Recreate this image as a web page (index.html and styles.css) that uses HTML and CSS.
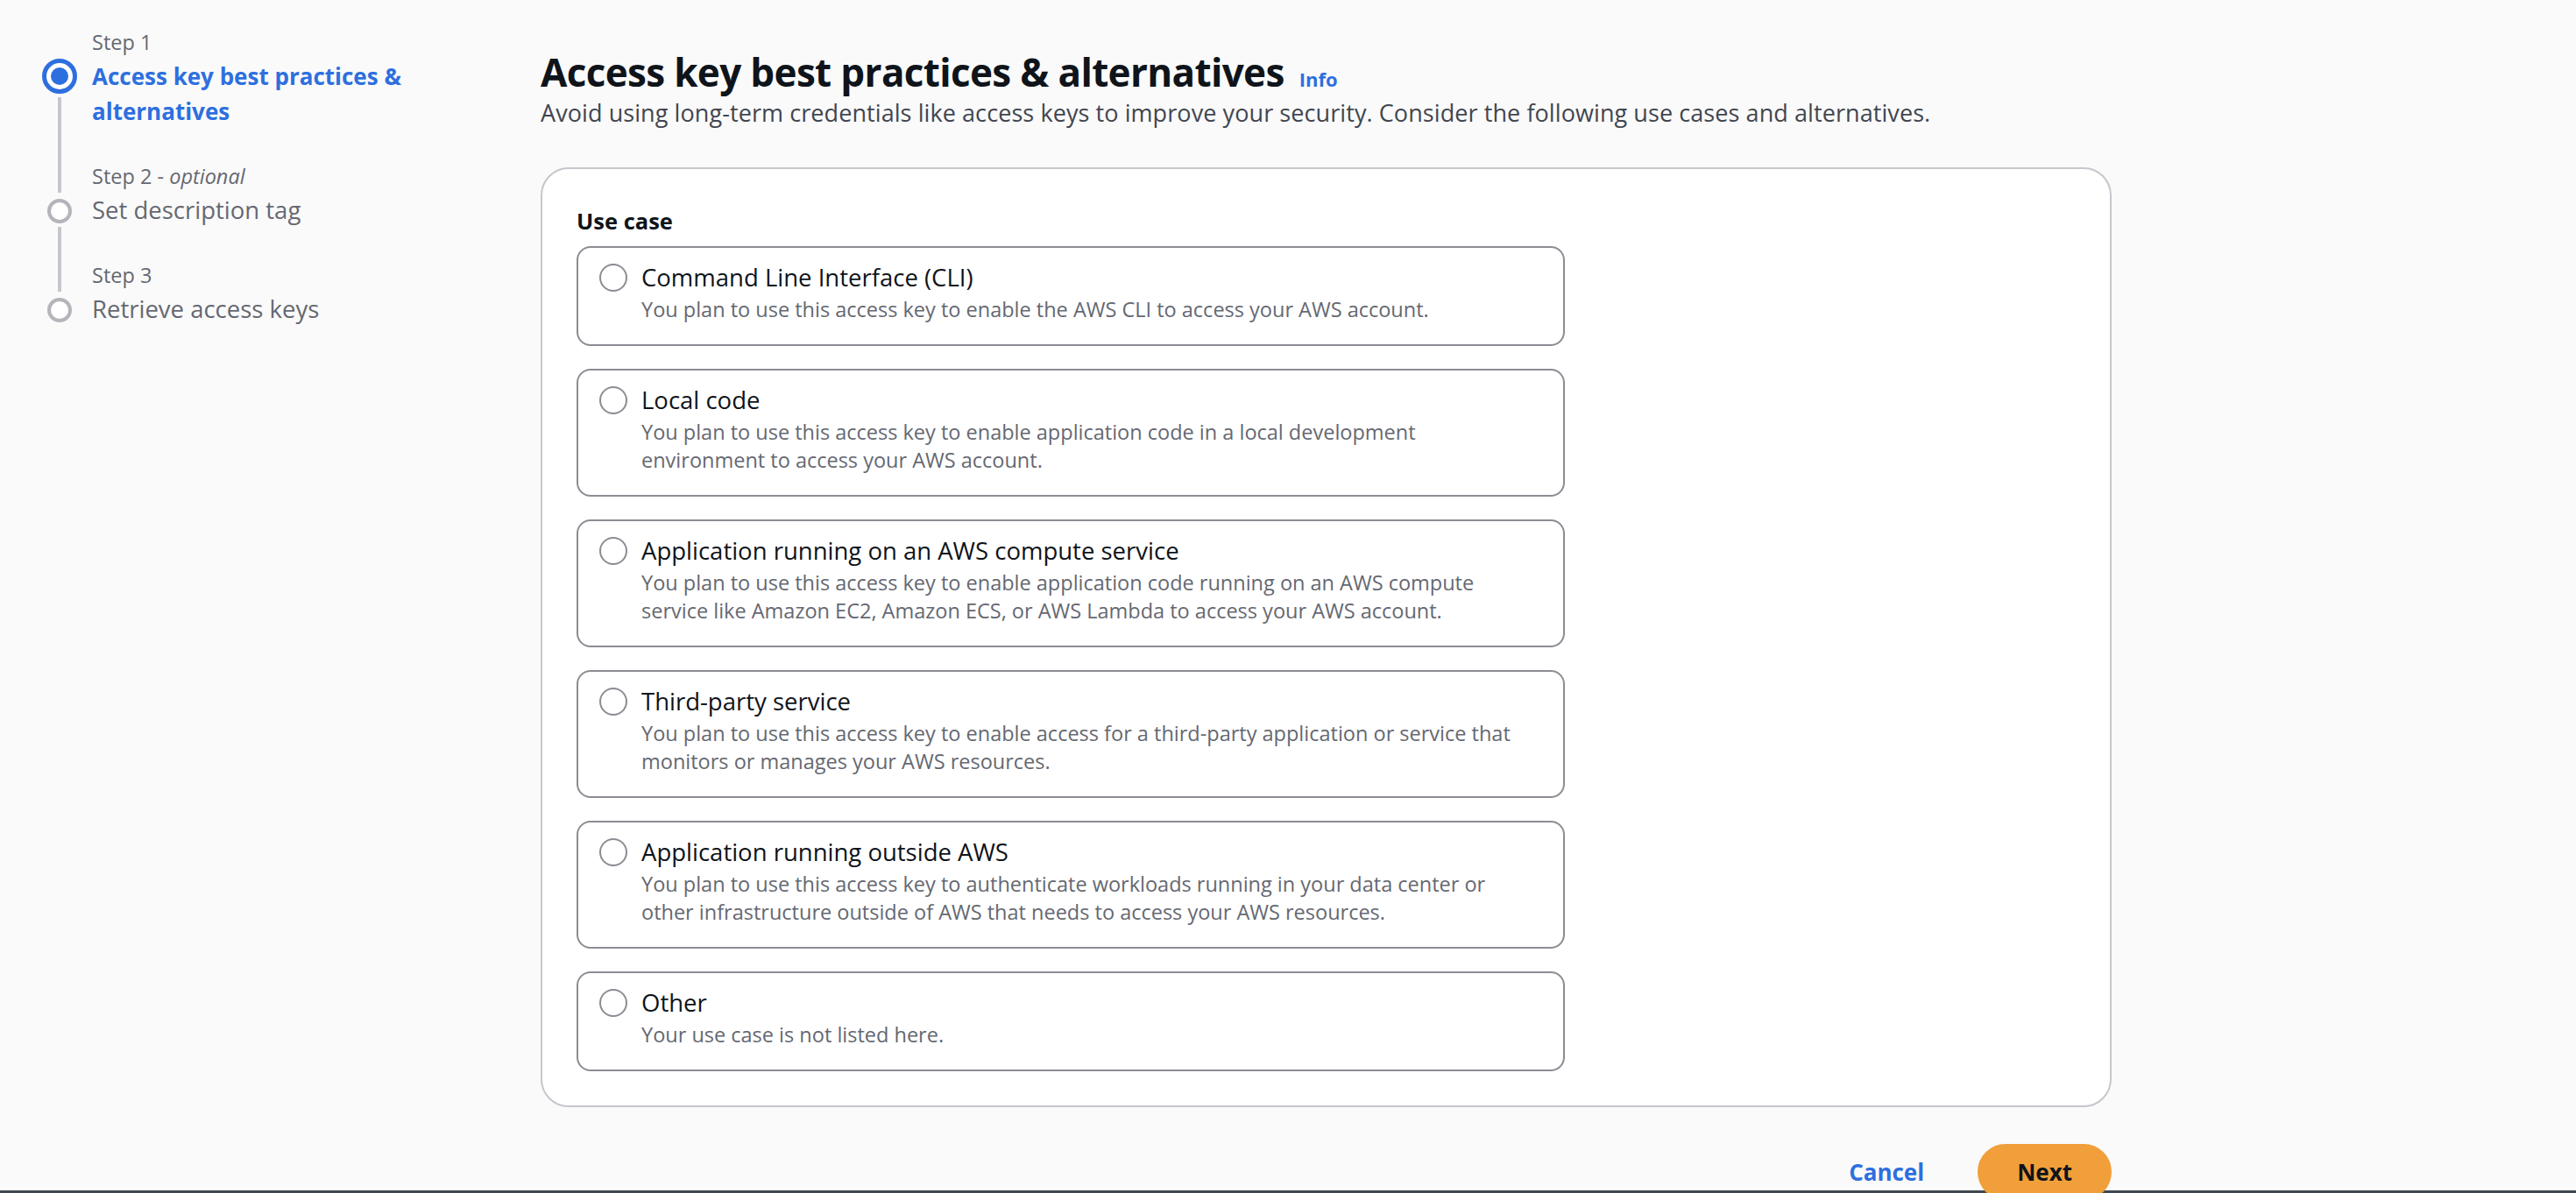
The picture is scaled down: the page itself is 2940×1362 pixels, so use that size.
FILE: index.html
```html
<!DOCTYPE html>
<html lang="en">
<head>
<meta charset="utf-8">
<title>Create access key</title>
<link rel="stylesheet" href="styles.css">
</head>
<body>
<div class="layout">
  <nav class="steps">
    <div class="step">
      <div class="step-label">Step 1</div>
      <div class="step-ind">
        <span class="dot dot-active"></span>
        <span class="rail"></span>
      </div>
      <div class="step-title active">Access key best practices &amp; alternatives</div>
    </div>
    <div class="step">
      <span class="rail-top"></span>
      <div class="step-label">Step 2 - <i>optional</i></div>
      <div class="step-ind">
        <span class="dot"></span>
        <span class="rail"></span>
      </div>
      <div class="step-title">Set description tag</div>
    </div>
    <div class="step">
      <span class="rail-top"></span>
      <div class="step-label">Step 3</div>
      <div class="step-ind">
        <span class="dot"></span>
      </div>
      <div class="step-title last">Retrieve access keys</div>
    </div>
  </nav>

  <main class="main">
    <h1 class="title">Access key best practices &amp; alternatives<a class="info">Info</a></h1>
    <p class="lead">Avoid using long-term credentials like access keys to improve your security. Consider the following use cases and alternatives.</p>

    <section class="container">
      <div class="field-label">Use case</div>
      <div class="tiles">
        <label class="tile">
          <span class="radio"></span>
          <span class="tile-text">
            <span class="tile-title">Command Line Interface (CLI)</span>
            <span class="tile-desc">You plan to use this access key to enable the AWS CLI to access your AWS account.</span>
          </span>
        </label>
        <label class="tile">
          <span class="radio"></span>
          <span class="tile-text">
            <span class="tile-title">Local code</span>
            <span class="tile-desc">You plan to use this access key to enable application code in a local development<br>environment to access your AWS account.</span>
          </span>
        </label>
        <label class="tile">
          <span class="radio"></span>
          <span class="tile-text">
            <span class="tile-title">Application running on an AWS compute service</span>
            <span class="tile-desc">You plan to use this access key to enable application code running on an AWS compute<br>service like Amazon EC2, Amazon ECS, or AWS Lambda to access your AWS account.</span>
          </span>
        </label>
        <label class="tile">
          <span class="radio"></span>
          <span class="tile-text">
            <span class="tile-title">Third-party service</span>
            <span class="tile-desc">You plan to use this access key to enable access for a third-party application or service that<br>monitors or manages your AWS resources.</span>
          </span>
        </label>
        <label class="tile">
          <span class="radio"></span>
          <span class="tile-text">
            <span class="tile-title">Application running outside AWS</span>
            <span class="tile-desc">You plan to use this access key to authenticate workloads running in your data center or<br>other infrastructure outside of AWS that needs to access your AWS resources.</span>
          </span>
        </label>
        <label class="tile">
          <span class="radio"></span>
          <span class="tile-text">
            <span class="tile-title">Other</span>
            <span class="tile-desc">Your use case is not listed here.</span>
          </span>
        </label>
      </div>
    </section>

    <div class="actions">
      <button class="btn btn-link">Cancel</button>
      <button class="btn btn-primary">Next</button>
    </div>
  </main>
</div>
<div class="footer-bar"></div>
</body>
</html>
```
FILE: styles.css
```css
html, body {
  margin: 0;
  padding: 0;
}
body {
  background: #fafafa;
  font-family: "Open Sans", "Noto Sans", "Liberation Sans", sans-serif;
  color: #0f141a;
  height: 1362px;
  overflow: hidden;
}
.layout {
  display: flex;
  align-items: flex-start;
}

/* ---------- steps nav ---------- */
.steps {
  width: 617px;
  box-sizing: border-box;
  padding: 32px 0 0 48px;
  flex: none;
}
.step {
  display: grid;
  grid-template-columns: 40px 400px;
  column-gap: 17px;
}
.step-label {
  grid-column: 2;
  grid-row: 1;
  font-size: 23.5px;
  line-height: 32px;
  color: #656871;
  margin-bottom: 3px;
}
.step-label i {
  font-style: italic;
}
.rail-top {
  grid-column: 1;
  grid-row: 1;
  justify-self: center;
  width: 4px;
  background: #c6c6cd;
}
.step-ind {
  grid-column: 1;
  grid-row: 2;
  display: flex;
  flex-direction: column;
  align-items: center;
}
.dot {
  width: 28px;
  height: 28px;
  box-sizing: border-box;
  border: 4px solid #b4b4bb;
  border-radius: 50%;
  background: #ffffff;
  margin-top: 7px;
  flex: none;
}
.dot-active {
  width: 40px;
  height: 40px;
  margin-top: 0;
  border: 5px solid #2e6fdf;
  display: flex;
  align-items: center;
  justify-content: center;
}
.dot-active::after {
  content: "";
  width: 20px;
  height: 20px;
  border-radius: 50%;
  background: #2e6fdf;
}
.rail {
  flex: 1;
  width: 4px;
  background: #c6c6cd;
  margin-top: 4px;
}
.step-title {
  grid-column: 2;
  grid-row: 2;
  font-size: 27.5px;
  line-height: 40px;
  color: #656871;
  padding-bottom: 38px;
}
.step-title.active {
  color: #2e6fdf;
  font-weight: 700;
  font-size: 26px;
}
.step-title.last {
  padding-bottom: 0;
}

/* ---------- main ---------- */
.main {
  width: 1793px;
  flex: none;
  padding-top: 56px;
}
.title {
  margin: 0;
  font-size: 44px;
  line-height: 52px;
  font-weight: 700;
  letter-spacing: -0.65px;
  color: #0f141a;
}
.info {
  font-size: 22px;
  line-height: 1;
  font-weight: 700;
  letter-spacing: 0;
  color: #2e6fdf;
  margin-left: 17px;
}
.lead {
  margin: 3px 0 0;
  font-size: 27px;
  line-height: 36px;
  letter-spacing: 0.08px;
  color: #424650;
}

.container {
  margin-top: 44px;
  background: #ffffff;
  border: 2px solid #c6c6cd;
  border-radius: 32px;
  padding: 43px 40px 39px 39px;
}
.field-label {
  font-size: 25.5px;
  line-height: 32px;
  font-weight: 700;
  color: #0f141a;
  margin-bottom: 13px;
}
.tiles {
  display: flex;
  flex-direction: column;
  gap: 26px;
  width: 1128px;
}
.tile {
  display: flex;
  align-items: flex-start;
  gap: 16px;
  border: 2px solid #8c8c94;
  border-radius: 16px;
  padding: 14px 24px 24px 24px;
  background: #ffffff;
}
.radio {
  flex: none;
  width: 32px;
  height: 32px;
  box-sizing: border-box;
  border: 2px solid #8c8c94;
  border-radius: 50%;
  background: #ffffff;
  margin-top: 4px;
}
.tile-text {
  display: flex;
  flex-direction: column;
}
.tile-title {
  font-size: 27.5px;
  line-height: 40px;
  color: #0f141a;
}
.tile-desc {
  font-size: 23.5px;
  line-height: 32px;
  color: #656871;
}

/* ---------- actions ---------- */
.actions {
  display: flex;
  justify-content: flex-end;
  gap: 16px;
  margin-top: 42px;
}
.btn {
  font-family: "Open Sans", "Noto Sans", "Liberation Sans", sans-serif;
  font-size: 26px;
  line-height: 40px;
  font-weight: 700;
  border-radius: 32px;
  padding: 10px 43px;
  border: 2px solid transparent;
  cursor: pointer;
}
.btn-link {
  background: transparent;
  color: #2e6fdf;
}
.btn-primary {
  background: #f19f3a;
  border-color: #f19f3a;
  color: #0f141a;
  position: relative;
  z-index: 2;
}
.footer-bar {
  position: fixed;
  left: 0;
  right: 0;
  bottom: 0;
  height: 3px;
  background: #414750;
  z-index: 1;
}
```
